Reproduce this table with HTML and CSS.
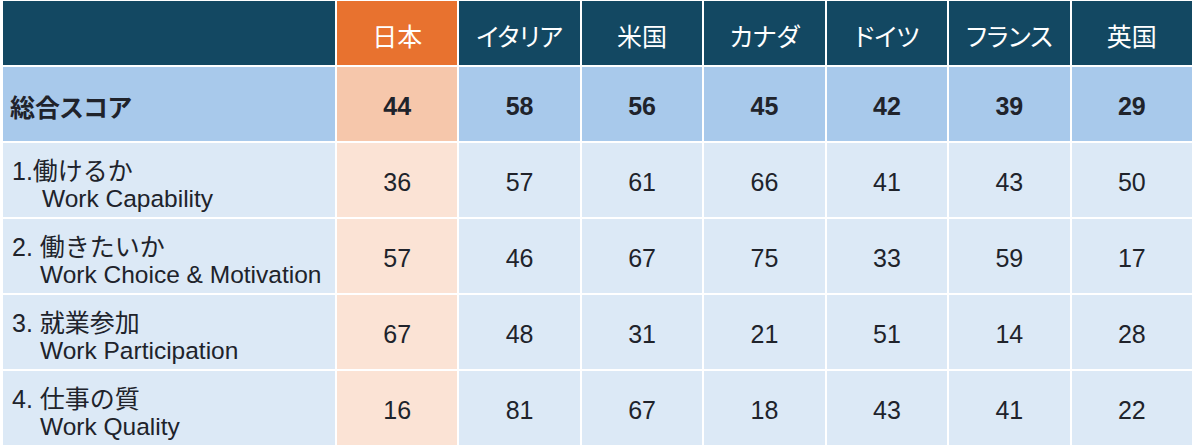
FILE: index.html
```html
<!DOCTYPE html>
<html lang="ja">
<head>
<meta charset="utf-8">
<link rel="stylesheet" href="styles.css">
</head>
<body>
<div class="table">
  <div class="cell head corner"></div>
  <div class="cell head jp">日本</div>
  <div class="cell head">イタリア</div>
  <div class="cell head">米国</div>
  <div class="cell head">カナダ</div>
  <div class="cell head">ドイツ</div>
  <div class="cell head">フランス</div>
  <div class="cell head">英国</div>

  <div class="cell total label">総合スコア</div>
  <div class="cell total jp num">44</div>
  <div class="cell total num">58</div>
  <div class="cell total num">56</div>
  <div class="cell total num">45</div>
  <div class="cell total num">42</div>
  <div class="cell total num">39</div>
  <div class="cell total num">29</div>

  <div class="cell row label"><span class="ja">1.働けるか</span><span class="en en1">Work Capability</span></div>
  <div class="cell row jp num">36</div>
  <div class="cell row num">57</div>
  <div class="cell row num">61</div>
  <div class="cell row num">66</div>
  <div class="cell row num">41</div>
  <div class="cell row num">43</div>
  <div class="cell row num">50</div>

  <div class="cell row label"><span class="ja">2. 働きたいか</span><span class="en">Work Choice &amp; Motivation</span></div>
  <div class="cell row jp num">57</div>
  <div class="cell row num">46</div>
  <div class="cell row num">67</div>
  <div class="cell row num">75</div>
  <div class="cell row num">33</div>
  <div class="cell row num">59</div>
  <div class="cell row num">17</div>

  <div class="cell row label"><span class="ja">3. 就業参加</span><span class="en">Work Participation</span></div>
  <div class="cell row jp num">67</div>
  <div class="cell row num">48</div>
  <div class="cell row num">31</div>
  <div class="cell row num">21</div>
  <div class="cell row num">51</div>
  <div class="cell row num">14</div>
  <div class="cell row num">28</div>

  <div class="cell row label"><span class="ja">4. 仕事の質</span><span class="en">Work Quality</span></div>
  <div class="cell row jp num">16</div>
  <div class="cell row num">81</div>
  <div class="cell row num">67</div>
  <div class="cell row num">18</div>
  <div class="cell row num">43</div>
  <div class="cell row num">41</div>
  <div class="cell row num">22</div>
</div>
</body>
</html>
```

FILE: styles.css
```css
html, body {
  margin: 0;
  padding: 0;
  background: #ffffff;
}
body {
  padding: 1px 0 0 3px;
  width: 1192px;
  height: 445px;
  box-sizing: border-box;
  overflow: hidden;
  font-family: "Liberation Sans", "Noto Sans CJK JP", sans-serif;
  color: #20232b;
}
.table {
  display: grid;
  grid-template-columns: 332px repeat(7, 1fr);
  grid-template-rows: 64px repeat(5, 74px);
  gap: 2px;
}
.cell {
  display: flex;
  align-items: center;
  justify-content: center;
  box-sizing: border-box;
}
.head {
  background: #134862;
  color: #ffffff;
  font-size: 25px;
  font-feature-settings: "palt";
  padding-top: 3px;
}
.head.jp {
  background: #e8722f;
}
.total {
  background: #a8c9eb;
  padding-top: 4px;
}
.total.jp {
  background: #f6c7ab;
}
.row {
  background: #dce9f6;
}
.row.jp {
  background: #fbe3d5;
}
.num {
  font-size: 25px;
}
.row.num {
  padding-top: 4px;
}
.total.num {
  font-weight: bold;
}
.label {
  justify-content: flex-start;
  padding-left: 9px;
}
.total.label {
  font-size: 25px;
  font-weight: bold;
  font-feature-settings: "palt";
  padding-left: 7px;
}
.row.label {
  flex-direction: column;
  align-items: flex-start;
  justify-content: center;
  line-height: 27px;
  padding-top: 10px;
}
.ja {
  font-size: 25px;
}
.en {
  font-size: 24.5px;
  padding-left: 28px;
}
.en1 {
  padding-left: 30px;
}
```
